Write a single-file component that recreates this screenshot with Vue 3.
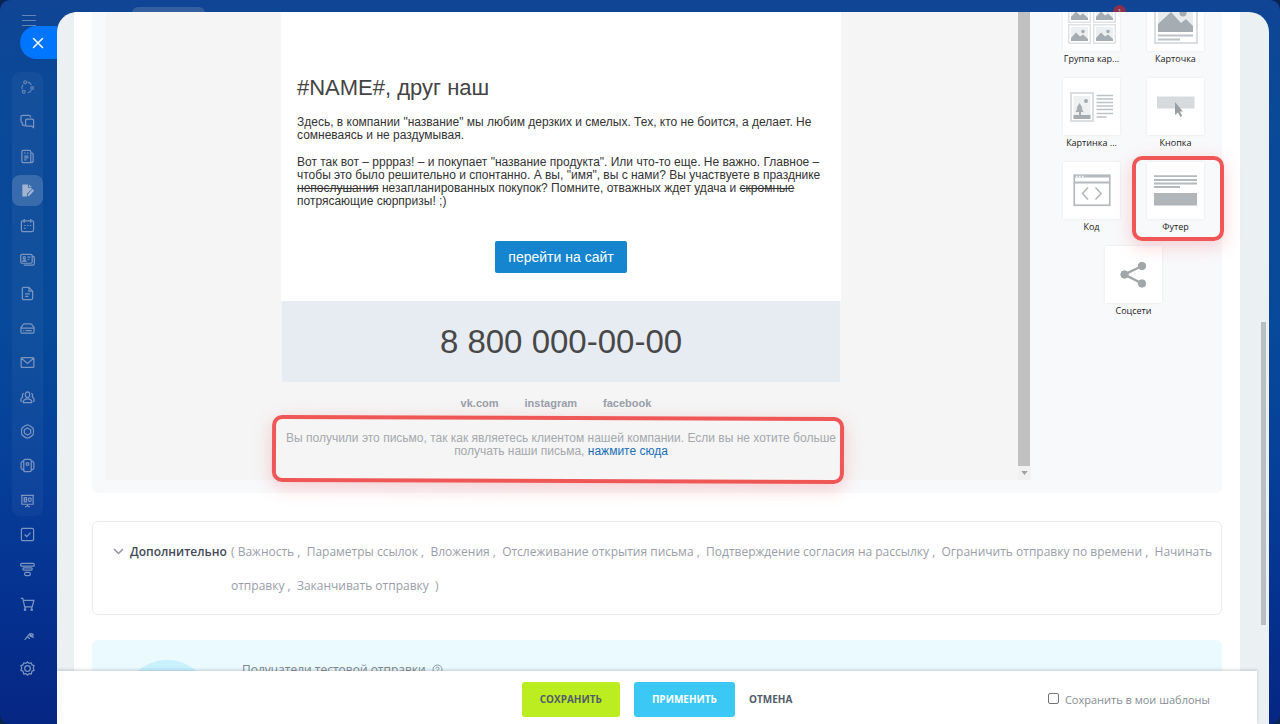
<script setup>
import { ref } from 'vue'

const groupIcons = [
  { id: 'collab', label: 'Коллабы', d: 'M7 2.5a1.5 1.5 0 1 0-2.9.4A1.5 1.5 0 0 0 7 2.5M8 2.2q3 .3 4 3.3M14.5 8.5a1.5 1.5 0 1 0-3 0 1.5 1.5 0 0 0 3 0M12 11q-1 2.200-3.5 2.600M5.5 12.5a1.5 1.5 0 1 0-3 0 1.5 1.5 0 0 0 3 0M2.3 10q-.6-3 1-5.200', dim: true },
  { id: 'chat', label: 'Чаты', d: 'M4.500 11.500V12.500L2.500 11.500V9.500Q1 9 1 7.500V3.200Q1 1.500 2.700 1.500H9.500Q11 1.500 11.500 3.500M7.500 5.500H13Q14.500 5.500 14.500 7V14.500L12.500 13H7.500Q6 13 6 11.500V7Q6 5.500 7.500 5.500Z' },
  { id: 'news', label: 'Новости', d: 'M3.5 1.500H10Q11.500 1.500 11.500 3V14.500H3.500Q2 14.500 2 13V3Q2 1.500 3.500 1.500ZM11.500 4Q14 4 14 5.500V13Q14 14.500 11.500 14.500M4.500 4.500H6M7.500 4.500H9M4.500 7.500H9M4.500 9.500H9M4.500 11.500H7' },
  { id: 'docs', label: 'Редактор', d: 'M2.500 1.500H8.500V5H12.500V6.500L7.500 11.500V14.500H2.500ZM9.500 1.500 12.500 4.200H9.500ZM13.300 6.500 15 8.200 10 13.500 8.500 14V12Z', filled: true },
  { id: 'calendar', label: 'Календарь', d: 'M3 3H13Q14.500 3 14.500 4.500V12.500Q14.500 14.500 13 14.500H3Q1.500 14.500 1.500 12.500V4.500Q1.500 3 3 3ZM4.500 1V5M11.500 1V5M4.500 8H6M7.500 8H9M10.500 8H12M4.500 11H6' },
  { id: 'contact', label: 'Контакты', d: 'M2.200 2.500H11.500Q13 2.500 13 4V10.500Q13 12 11.500 12H2.200Q.8 12 .8 10.500V4Q.8 2.500 2.200 2.500ZM13 4.500Q15.300 4.500 15.300 6V12.500Q15.300 14 13.800 14H4M5.800 6a1.200 1.200 0 1 0-2.400 0 1.200 1.200 0 0 0 2.400 0M3 9.800Q4.600 7.200 6.300 9.800ZM8 5.500H11.200M8 8H10' },
  { id: 'file', label: 'Документы', d: 'M4 1.500H9.500L13.500 5.500V13Q13.500 14.500 12 14.500H4Q2.500 14.500 2.500 13V3Q2.500 1.500 4 1.500ZM9.500 1.500V5.500H13.500M5.500 8.500H10.500M5.500 11H9' },
  { id: 'drive', label: 'Диск', d: 'M1 7 3.500 3.500Q4 3 5 3H11Q12 3 12.500 3.500L15 7V11.500Q15 13 13.500 13H2.500Q1 13 1 11.500ZM1 7.500H15M3.500 10.200H4.500M6 10.200H12.500' },
  { id: 'mail', label: 'Почта', d: 'M2.200 2.800H13.800Q14.800 2.800 14.800 3.800V12.200Q14.800 13.200 13.800 13.200H2.200Q1.200 13.200 1.200 12.200V3.800Q1.200 2.800 2.200 2.800ZM1.500 3.500 8 9 14.500 3.500' },
  { id: 'team', label: 'Группы', d: 'M10.300 5Q10.300 8 8 8 5.700 8 5.700 5 5.700 2 8 2 10.300 2 10.300 5ZM3.500 13.500Q3.500 9.500 8 9.500 12.500 9.500 12.500 13.500ZM4 3.500Q2 4 2.800 7.500L1 9.500V12H2.500M12 3.500Q14 4 13.200 7.500L15 9.500V12H13.500' },
  { id: 'crm', label: 'CRM', d: 'M8 .8Q11 1.500 14 4.500 15 8 14 11.500 11 14.500 8 15.200 5 14.500 2 11.500 1 8 2 4.500 5 1.500 8 .8ZM8 4.200 11.400 6.200V9.800L8 11.800 4.600 9.800V6.200Z' },
  { id: 'market', label: 'Маркет', d: 'M5.500 1.500H10.500Q12 1.500 12 3V13Q12 14.500 10.500 14.500H5.500Q4 14.500 4 13V3Q4 1.500 5.500 1.500ZM4 3.500H2.500L1.200 5V11L2.500 12.500H4M12 3.500H13.500L14.800 5V11L13.500 12.500H12M9.500 6.500a1.500 1.500 0 1 0-3 0 1.500 1.500 0 0 0 3 0' },
  { id: 'board', label: 'Доски', d: 'M1 2.500H15M2 2.500V12H14V2.500M4.500 5H7V9.500H4.500ZM4.500 7.200H7M12 7.200a1.500 2 0 1 0-3 0 1.500 2 0 0 0 3 0M8 12V14M5.500 15 8 13.500 10.500 15' },
]

const extraIcons = [
  { id: 'tasks', label: 'Задачи', d: 'M3 1.500H13Q14.500 1.500 14.500 3V13Q14.500 14.500 13 14.500H3Q1.500 14.500 1.500 13V3Q1.500 1.500 3 1.500ZM5 8 7.200 10.200 11.200 6' },
  { id: 'funnel', label: 'Воронка', d: 'M2 1.500H14Q15.300 1.500 15.300 3T14 4.500H2Q.7 4.500 .7 3T2 1.500ZM4 6.300H12Q13 6.300 13 7.500T12 8.700H4Q3 8.700 3 7.500T4 6.300ZM6.500 11H9.500Q11 11 11 12.700T9.500 14.500H6.500Q5 14.500 5 12.700T6.500 11Z' },
  { id: 'shop', label: 'Магазин', d: 'M.8 1.500H3L5 10.500H13L14.800 3.500H3.500M6 10.500 5 13M12.500 10.500V13M6.200 13.500a.8.8 0 1 0-1.600 0 .8.8 0 0 0 1.600 0M13.300 13.500a.8.8 0 1 0-1.600 0 .8.8 0 0 0 1.600 0' },
  { id: 'sign', label: 'Подпись', d: 'M5 11.500 10.500 5 14.500 9.500M14 6.500a1.700 1.700 0 1 0-3.400 0 1.700 1.700 0 0 0 3.400 0M8 8.500 10.500 10.500', small: true },
  { id: 'settings', label: 'Настройки', d: 'M8 1 9.800 2.600 12 2 12.800 4.200 15 5 14.200 7.500 15 10 12.800 11 12 13.800 9.800 13.400 8 15 6.200 13.400 4 13.800 3.200 11 1 10 1.800 7.500 1 5 3.200 4.200 4 2 6.200 2.600ZM11 8a3 3 0 1 0-6 0 3 3 0 0 0 6 0' },
]

const options = [
  'Важность', 'Параметры ссылок', 'Вложения', 'Отслеживание открытия письма',
  'Подтверждение согласия на рассылку', 'Ограничить отправку по времени',
  'Начинать отправку', 'Заканчивать отправку',
]

const blocks = [
  { id: 'group', label: 'Группа кар...' },
  { id: 'card', label: 'Карточка' },
  { id: 'image', label: 'Картинка ...' },
  { id: 'button', label: 'Кнопка' },
  { id: 'code', label: 'Код' },
  { id: 'footer', label: 'Футер' },
  { id: 'social', label: 'Соцсети' },
]

const saveTemplate = ref(false)
</script>

<template>
  <div class="app">
    <span class="back-tab"></span>
    <span class="back-badge">1</span>

    <aside class="sidebar">
      <button class="burger" type="button" aria-label="Меню"><i></i><i></i><i></i></button>
      <button class="close" type="button" aria-label="Закрыть">
        <svg width="12" height="12" viewBox="0 0 12 12"><path d="M1.500 1.500 10.500 10.500M10.500 1.500 1.500 10.500" /></svg>
      </button>
      <nav class="nav-group">
        <a v-for="i in groupIcons" :key="i.id" href="#" class="nav-item" :class="{ active: i.filled, dim: i.dim }" :aria-label="i.label">
          <svg width="15" height="15" viewBox="0 0 16 16" :class="{ filled: i.filled }"><path :d="i.d" /></svg>
        </a>
      </nav>
      <nav class="nav-extra">
        <a v-for="i in extraIcons" :key="i.id" href="#" class="nav-item" :class="{ small: i.small }" :aria-label="i.label">
          <svg width="15" height="15" viewBox="0 0 16 16"><path :d="i.d" /></svg>
        </a>
      </nav>
    </aside>

    <main class="panel">
      <div class="scroller">
        <div class="paper">
          <section class="editor">
            <div class="canvas">
              <div class="email">
                <div class="letter">
                  <h1>#NAME#, друг наш</h1>
                  <p>Здесь, в компании "название" мы любим дерзких и смелых. Тех, кто не боится, а делает. Не<br>сомневаясь и не раздумывая.</p>
                  <p>Вот так вот – рррраз! – и покупает "название продукта". Или что-то еще. Не важно. Главное –<br>чтобы это было решительно и спонтанно. А вы, "имя", вы с нами? Вы участвуете в празднике<br><s>непослушания</s> незапланированных покупок? Помните, отважных ждет удача и <s>скромные</s><br>потрясающие сюрпризы! ;)</p>
                  <a class="cta" href="#">перейти на сайт</a>
                </div>
                <div class="phone">8 800 000-00-00</div>
                <div class="links"><a href="#">vk.com</a><a href="#">instagram</a><a href="#">facebook</a></div>
                <div class="disclaimer">
                  Вы получили это письмо, так как являетесь клиентом нашей компании. Если вы не хотите больше<br>получать наши письма, <a href="#">нажмите сюда</a>
                  <span class="mark mark-text"></span>
                </div>
              </div>
            </div>
            <div class="track"><div class="thumb"></div><div class="arrow"><svg width="7" height="4" viewBox="0 0 8 5"><path d="M0 0H8L4 5Z" fill="#a0a0a0" /></svg></div></div>
            <div class="palette">
              <div v-for="b in blocks" :key="b.id" class="block">
                <div class="tile">
                  <svg width="57" height="57" viewBox="0 0 57 57">
                    <g v-if="b.id === 'group'">
                      <g v-for="p in [[5, 9], [30, 9], [5, 30], [30, 30]]" :key="p.join()" :transform="`translate(${p[0]} ${p[1]})`">
                        <rect x=".75" y=".75" width="21.500" height="18.500" fill="#fff" stroke="#dfe2e5" stroke-width="1.500" />
                        <rect x="3" y="3" width="17" height="14" fill="#eceff1" />
                        <path d="M3 17V14L8 8.500 12 12.500 15 10.500 20 15V17Z" fill="#a5adb2" /><circle cx="15" cy="7.500" r="1.800" fill="#a5adb2" />
                      </g>
                    </g>
                    <g v-else-if="b.id === 'card'">
                      <rect x="8" y="2" width="42" height="47" fill="#fff" stroke="#dadee1" stroke-width="2" />
                      <rect x="11" y="5" width="35" height="33" fill="#e9ecee" />
                      <path d="M11 38V30L24 18 34 29 39 25 46 32V38Z" fill="#a5adb2" /><circle cx="36" cy="19" r="3.500" fill="#a5adb2" />
                      <path d="M11 41.500H46M11 45.500H33" stroke="#bcc2c6" stroke-width="2" />
                    </g>
                    <g v-else-if="b.id === 'image'">
                      <rect x="8" y="15" width="22" height="28" fill="#fff" stroke="#dadee1" stroke-width="2" />
                      <rect x="10.500" y="18" width="17" height="22" fill="#eef0f2" />
                      <path d="M10.500 37H27.500V41H10.500ZM16 37V34H12.500L14.500 30H13.500L16.500 25 19.500 30H18.500L20.500 34H18V37Z" fill="#a5adb2" /><circle cx="23" cy="23" r="2" fill="#a5adb2" />
                      <path d="M33.500 17.500H50M33.500 21H50M33.500 24.500H50M33.500 28H50M33.500 31.500H50M33.500 35.500H50M33.500 39H43.500" stroke="#bcc2c6" stroke-width="1.700" />
                    </g>
                    <g v-else-if="b.id === 'button'">
                      <rect x="10" y="18.500" width="37.500" height="12" fill="#d7dadc" />
                      <path d="M28 24V37L31 34.500 33.500 39 35.200 38 33 33.500H36Z" fill="#98a0a6" />
                    </g>
                    <g v-else-if="b.id === 'code'">
                      <rect x="11.250" y="13.250" width="35.500" height="30" fill="#fff" stroke="#b4babe" stroke-width="1.700" />
                      <path d="M11 14.500H47M11 20.500H47" stroke="#b4babe" stroke-width="2" /><path d="M13 14.500H14.500M16 14.500H17.500M19 14.500H20.500" stroke="#fff" stroke-width="1.300" />
                      <path d="M25 25.500 19.500 31.500 25 37.500M32.500 25.500 38 31.500 32.500 37.500" fill="none" stroke="#b4babe" stroke-width="1.700" />
                    </g>
                    <g v-else-if="b.id === 'footer'">
                      <path d="M7 14.200H50M7 18H50M7 21.500H50M7 25H33" stroke="#b4babe" stroke-width="1.800" />
                      <rect x="7" y="31" width="43" height="12.500" fill="#b0b6ba" />
                    </g>
                    <g v-else fill="#a1a6a9" stroke="#a1a6a9">
                      <path d="M37 20 19.500 28.500 37 37.500" fill="none" stroke-width="2.500" />
                      <circle cx="19.500" cy="28.500" r="3.700" /><circle cx="37" cy="20" r="3.700" /><circle cx="37" cy="37.500" r="3.700" />
                    </g>
                  </svg>
                </div>
                <span class="block-label">{{ b.label }}</span>
                <span v-if="b.id === 'footer'" class="mark mark-tile"></span>
              </div>
            </div>
          </section>

          <section class="extra">
            <svg class="chev" width="11" height="7" viewBox="0 0 11 7"><path d="M1 1 5.500 5.500 10 1" /></svg>
            <strong>Дополнительно</strong>
            <div class="options">( <template v-for="(o, n) in options" :key="o"><span>{{ o }}</span><template v-if="n < options.length - 1"> ,&nbsp; </template></template>&nbsp; )</div>
          </section>

          <section class="testers">
            <div class="avatar"></div>
            <span>Получатели тестовой отправки</span>
            <svg width="11" height="11" viewBox="0 0 11 11"><circle cx="5.500" cy="5.500" r="4.500" /><path d="M4 4.500Q4 3 5.500 3T7 4.500 5.500 6V6.500M5.500 7.500V8.500" /></svg>
          </section>
        </div>
        <div class="page-thumb"></div>
      </div>

      <footer class="actions">
        <div class="buttons">
          <button class="btn save" type="button">СОХРАНИТЬ</button>
          <button class="btn apply" type="button">ПРИМЕНИТЬ</button>
          <button class="btn cancel" type="button">ОТМЕНА</button>
        </div>
        <label class="check"><input v-model="saveTemplate" type="checkbox"><span>Сохранить в мои шаблоны</span></label>
      </footer>
    </main>
  </div>
</template>

<style>
html { background: #0a2450; }
body { margin: 0; }
</style>

<style scoped>
* { box-sizing: border-box; }
a { text-decoration: none; color: inherit; }
button { border: 0; padding: 0; font: inherit; }

.app {
  position: relative;
  display: flex;
  height: 100vh;
  overflow: hidden;
  border-radius: 10px;
  font-family: "Open Sans", "Noto Sans", sans-serif;
  background: linear-gradient(180deg, #0f4594 0%, #0b4898 12%, #07499a 45%, #063f9a 65%, #05308f 85%, #062683 100%);
}
.back-tab {
  position: absolute;
  left: 132px;
  top: 7px;
  width: 73px;
  height: 16px;
  border-radius: 6px;
  background: #345f9f;
}
.back-badge {
  position: absolute;
  right: 154px;
  top: 5px;
  width: 13px;
  height: 13px;
  border-radius: 7px;
  background: #8c2f4c;
  color: #c8b3c6;
  font-size: 8px;
  line-height: 12px;
  text-align: center;
}

.sidebar {
  flex: 0 0 57px;
  display: flex;
  flex-direction: column;
  padding: 15px 0 0;
}
.burger {
  display: flex;
  flex-direction: column;
  gap: 4px;
  width: 14px;
  height: 11px;
  margin-left: 22px;
  background: none;
}
.burger i { display: block; width: 14px; height: 1px; flex: none; background: #6385b8; }
.close {
  display: flex;
  align-items: center;
  justify-content: center;
  height: 33px;
  margin-left: 20px;
  padding-right: 2px;
  border-radius: 17px 0 0 17px;
  background: #0075ff;
}
.close svg { stroke: #fff; stroke-width: 1.5; fill: none; stroke-linecap: round; }
.nav-group {
  display: flex;
  flex-direction: column;
  justify-content: space-between;
  width: 31px;
  height: 444px;
  flex: none;
  margin: 13px 0 3px 12px;
  border-radius: 8px;
  background: rgba(255, 255, 255, .04);
}
.nav-extra {
  display: flex;
  flex-direction: column;
  gap: 4px;
  width: 31px;
  margin-left: 12px;
}
.nav-item {
  display: flex;
  align-items: center;
  justify-content: center;
  height: 31px;
  border-radius: 8px;
}
.nav-item.active { background: rgba(255, 255, 255, .16); }
.nav-item.small { height: 25px; }
.nav-item.dim { opacity: .75; }
.nav-item svg { fill: none; stroke: #7c95c0; stroke-width: 1.3; }
.nav-item svg.filled { fill: #a3b4d1; stroke: none; }

.panel {
  flex: 1;
  min-width: 0;
  display: flex;
  flex-direction: column;
  position: relative;
  margin: 12px 11px 0 0;
  border-radius: 20px 20px 0 0;
  overflow: hidden;
  background: #ebf0f3;
}
.scroller {
  flex: 1;
  min-height: 0;
  position: relative;
  overflow: hidden;
  padding: 0 29px 0 17px;
}
.page-thumb {
  position: absolute;
  right: 3px;
  top: 47%;
  width: 5px;
  height: 46%;
  background: #b9bfc1;
}
.paper { padding: 0 18px; background: #fff; }

.editor {
  display: flex;
  padding: 0 0 13px 14px;
  border-radius: 0 0 6px 6px;
  background: #f8f9fb;
}
.canvas { flex: 1; min-width: 0; padding-right: 2px; background: #f5f5f5; }
.email {
  width: 560px;
  margin: 0 auto;
  padding-bottom: 22px;
  font-family: "Liberation Sans", Arial, sans-serif;
}
.letter {
  padding: 62px 16px 28px;
  background: #fff;
  color: #333;
  font-size: 12px;
  line-height: 13px;
  white-space: nowrap;
}
.letter h1 {
  margin: 0 0 14px;
  font-size: 22px;
  font-weight: 400;
  line-height: 28px;
  color: #444;
}
.letter p { margin: 0 0 14px; }
.cta {
  display: block;
  width: 132px;
  margin: 33px auto 0;
  border-radius: 2px;
  background: #1585d0;
  color: #fff;
  font-size: 14px;
  line-height: 32px;
  text-align: center;
}
.phone {
  margin: 0 1px;
  background: #e7ebf2;
  color: #484848;
  font-size: 33px;
  line-height: 81px;
  text-align: center;
}
.links {
  display: flex;
  justify-content: center;
  gap: 26px;
  margin: 14px 10px 22px 0;
  font-size: 11px;
  font-weight: 700;
  line-height: 14px;
  color: #9a9fab;
}
.disclaimer {
  position: relative;
  color: #a5a9ad;
  font-size: 12px;
  line-height: 13px;
  text-align: center;
  white-space: nowrap;
}
.disclaimer a { color: #1a6fb5; }

.mark {
  position: absolute;
  z-index: 2;
  border: 4px solid #ef5757;
  border-radius: 10px;
  box-shadow: 0 5px 18px rgba(240, 70, 80, .25);
  pointer-events: none;
}
.mark-text { inset: -16px -3px -25px -9px; transform: rotate(.2deg); }
.mark-tile { inset: -6px -20px -6px -15px; }

.track { flex: 0 0 13px; display: flex; flex-direction: column; }
.thumb { flex: 1; margin-right: 1px; background: #c1c1c1; }
.arrow { display: flex; align-items: center; justify-content: center; height: 14px; background: #f1f1f1; }

.palette {
  flex: 0 0 191px;
  display: flex;
  flex-wrap: wrap;
  justify-content: center;
  align-content: flex-start;
  gap: 11px 27px;
  margin-top: -18px;
  padding: 0 18px 0 32px;
}
.block { position: relative; width: 57px; }
.tile { height: 57px; background: #fff; box-shadow: 0 0 2px rgba(80, 90, 110, .12); }
.tile svg { display: block; }
.block-label {
  display: block;
  font-size: 9px;
  line-height: 16px;
  color: #222;
  text-align: center;
  white-space: nowrap;
}

.extra {
  display: flex;
  margin-top: 28px;
  padding: 13px 4px 11px 20px;
  border: 1px solid #e9ebee;
  border-radius: 6px;
  font-size: 12px;
  line-height: 34px;
}
.chev { flex: none; margin: 13px 6px 0 0; fill: none; stroke: #8f969e; stroke-width: 1.5; }
.extra strong { flex: none; width: 101px; font-weight: 600; color: #444b57; }
.options { color: #9a9ea8; }

.testers {
  display: flex;
  align-items: flex-start;
  margin-top: 25px;
  padding: 20px 30px 0;
  border-radius: 6px 6px 0 0;
  background: #ebfafe;
  color: #80868e;
  font-size: 12px;
  line-height: 20px;
}
.avatar { width: 90px; height: 90px; margin-right: 30px; border-radius: 50%; background: #c9f0fe; }
.testers svg { margin: 4px 0 0 6px; fill: none; stroke: #8c9ba1; }

.actions {
  position: relative;
  z-index: 3;
  display: grid;
  grid-template-columns: 1fr auto 1fr;
  align-items: center;
  height: 53px;
  flex: none;
  margin-right: 12px;
  padding: 4px 47px 0;
  background: #fff;
  box-shadow: 0 -1px 3px rgba(60, 80, 90, .25);
}
.buttons { grid-column: 2; display: flex; gap: 14px; }
.btn {
  height: 35px;
  padding: 0 18px;
  border-radius: 3px;
  font-size: 10px;
  font-weight: 700;
  line-height: 35px;
}
.save { background: #bbed21; color: #535c69; }
.apply { background: #3bc8f5; color: #fff; }
.cancel { padding: 0; background: none; color: #535c69; }
.check {
  justify-self: end;
  display: flex;
  align-items: center;
  gap: 6px;
  color: #868d95;
  font-size: 11px;
  line-height: 16px;
}
.check input {
  appearance: none;
  width: 11px;
  height: 11px;
  margin: 0 0 3px;
  border: 1px solid #767676;
  border-radius: 2px;
  background: #fff;
}
.check input:checked { background: #3bc8f5; }
</style>
